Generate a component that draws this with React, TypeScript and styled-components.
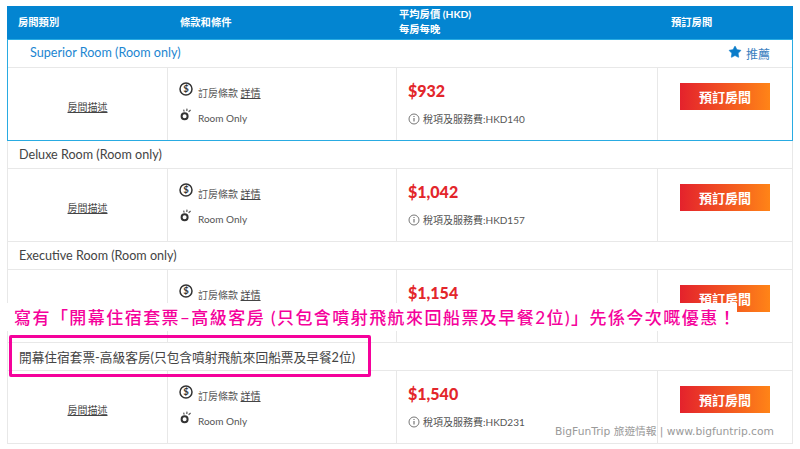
import React from "react"
import styled, { createGlobalStyle } from "styled-components"
import { Star } from "lucide-react"

const GlobalStyle = createGlobalStyle`
  html, body {
    margin: 0;
    padding: 0;
    width: 800px;
    height: 449px;
    overflow: hidden;
    background: #fff;
    font-family: Lato, "Noto Sans CJK TC", sans-serif;
  }
  * { box-sizing: border-box; }
`

const rooms = [
  { name: "Superior Room (Room only)", price: "$932", tax: "HKD140", featured: true },
  { name: "Deluxe Room (Room only)", price: "$1,042", tax: "HKD157" },
  { name: "Executive Room (Room only)", price: "$1,154", tax: "HKD173" },
  { name: "開幕住宿套票-高級客房(只包含噴射飛航來回船票及早餐2位)", price: "$1,540", tax: "HKD231", wide: true },
]

const DollarIcon = () => (
  <svg width="14" height="14" viewBox="0 0 14 14">
    <circle cx="7" cy="7" r="6" fill="none" stroke="#333" strokeWidth="1.5" />
    <text x="7" y="10.3" fontSize="9.5" fontWeight="700" fontFamily="Lato" textAnchor="middle" fill="#333">$</text>
  </svg>
)

const RoomOnlyIcon = () => (
  <svg width="14" height="14" viewBox="0 0 14 14">
    <circle cx="5.6" cy="9.2" r="3" fill="none" stroke="#333" strokeWidth="2" />
    <path d="M4.6 2.6 5.2 4.6M8 1.6 7.8 4M11.6 3 9.6 4.8" stroke="#555" strokeWidth="1.2" />
  </svg>
)

const InfoIcon = () => (
  <svg width="12" height="12" viewBox="0 0 12 12">
    <circle cx="6" cy="6" r="5" fill="none" stroke="#777" strokeWidth="1" />
    <path d="M6 5v3.6M6 3v1.1" stroke="#777" strokeWidth="1.2" />
  </svg>
)

const App: React.FC = () => {
  return (
    <>
      <GlobalStyle />
      <Page>
        <Table>
          <HeaderRow>
            <HeaderCell>房間類別</HeaderCell>
            <HeaderCell>條款和條件</HeaderCell>
            <HeaderCell>
              平均房價 (HKD)
              <br />
              每房每晚
            </HeaderCell>
            <HeaderAction>預訂房間</HeaderAction>
          </HeaderRow>
          {rooms.map((room) => (
            <Room key={room.name} $featured={room.featured}>
              <RoomTitle $featured={room.featured}>
                <RoomName $featured={room.featured} $wide={room.wide}>
                  {room.name}
                </RoomName>
                {room.featured && (
                  <Recommended>
                    <RaisedStar size={14} fill="#0a7cc9" color="#0a7cc9" strokeWidth={1} />
                    推薦
                  </Recommended>
                )}
              </RoomTitle>
              <RoomBody>
                <DescCell>
                  <TextLink>房間描述</TextLink>
                </DescCell>
                <TermsCell>
                  <TermRow>
                    <DollarIcon />
                    <TermText>
                      訂房條款 <TextLink>詳情</TextLink>
                    </TermText>
                  </TermRow>
                  <TermRow>
                    <RoomOnlyIcon />
                    <TermText>Room Only</TermText>
                  </TermRow>
                </TermsCell>
                <PriceCell>
                  <Price>{room.price}</Price>
                  <TaxRow>
                    <InfoIcon />
                    <TaxText>稅項及服務費:{room.tax}</TaxText>
                  </TaxRow>
                </PriceCell>
                <ActionCell>
                  <BookButton>預訂房間</BookButton>
                </ActionCell>
              </RoomBody>
            </Room>
          ))}
        </Table>
        <Caption>寫有「開幕住宿套票–高級客房 (只包含噴射飛航來回船票及早餐2位)」先係今次嘅優惠！</Caption>
        <Highlight />
        <Watermark>BigFunTrip 旅遊情報 | www.bigfuntrip.com</Watermark>
      </Page>
    </>
  )
}

const Page = styled.div`
  position: relative;
  width: 800px;
  height: 449px;
  padding: 6px 7px 0;
  background: #fff;
`

const Table = styled.div`
  display: flex;
  flex-direction: column;
  width: 786px;
`

const HeaderRow = styled.div`
  display: grid;
  grid-template-columns: 160px 229px 261px 136px;
  height: 33px;
  background: #0385d1;
  color: #fff;
  font-size: 10.3px;
  font-weight: 700;
  line-height: 15px;
`

const HeaderCell = styled.div`
  display: flex;
  flex-direction: column;
  justify-content: center;
  padding-left: 11px;
  &:nth-child(2) { padding-left: 13px; }
  &:nth-child(3) { padding-left: 3px; display: block; padding-top: 1px; }
`

const HeaderAction = styled.div`
  display: flex;
  align-items: center;
  padding-left: 14px;
`

const Room = styled.div<{ $featured?: boolean }>`
  display: flex;
  flex-direction: column;
  height: ${(p) => (p.$featured ? "102px" : "101px")};
  border: 1px solid ${(p) => (p.$featured ? "#29abe2" : "#e8e8e8")};
  border-top-width: ${(p) => (p.$featured ? "1px" : "0")};
`

const RoomTitle = styled.div<{ $featured?: boolean }>`
  display: flex;
  align-items: center;
  justify-content: space-between;
  height: 28px;
  padding: 0 22px 0 ${(p) => (p.$featured ? "22px" : "11px")};
  border-bottom: 1px solid #e8e8e8;
`

const RoomName = styled.div<{ $featured?: boolean; $wide?: boolean }>`
  padding-bottom: ${(p) => (p.$featured ? "3px" : "0")};
  font-size: ${(p) => (p.$wide ? "12.7px" : "12.6px")};
  color: ${(p) => (p.$featured ? "#1c86d1" : "#444")};
`

const Recommended = styled.div`
  display: flex;
  align-items: center;
  gap: 4px;
  font-size: 12px;
  color: #3a80c0;
`

const RaisedStar = styled(Star)`
  margin-bottom: 3px;
`

const RoomBody = styled.div`
  flex: 1;
  display: grid;
  grid-template-columns: 160px 229px 261px 1fr;
`

const BodyCell = styled.div`
  border-right: 1px solid #e8e8e8;
  &:last-child { border-right: 0; }
`

const DescCell = styled(BodyCell)`
  display: flex;
  align-items: center;
  justify-content: center;
  padding-top: 5px;
`

const TermsCell = styled(BodyCell)`
  display: flex;
  flex-direction: column;
  gap: 8px;
  padding: 14px 0 0 11px;
`

const TermRow = styled.div`
  display: flex;
  align-items: flex-start;
  gap: 5px;
  height: 17px;
`

const TermText = styled.span`
  margin-top: 1px;
  font-size: 10px;
  line-height: 20px;
  color: #555;
`

const TextLink = styled.span`
  font-size: 10px;
  color: #444;
  text-decoration: underline;
`

const PriceCell = styled(BodyCell)`
  padding: 11px 0 0 11px;
`

const Price = styled.div`
  font-size: 16px;
  font-weight: 900;
  line-height: 24px;
  color: #e3262b;
`

const TaxRow = styled.div`
  display: flex;
  align-items: center;
  gap: 3px;
  margin-top: 8px;
`

const TaxText = styled.span`
  font-size: 10px;
  color: #555;
`

const ActionCell = styled(BodyCell)`
  padding: 15px 0 0 22px;
`

const BookButton = styled.div`
  display: flex;
  align-items: center;
  justify-content: center;
  width: 90px;
  height: 27px;
  background: linear-gradient(90deg, #e4222c, #ff8417);
  color: #fff;
  font-size: 13px;
  font-weight: 700;
`

const Caption = styled.div`
  position: absolute;
  left: 0;
  top: 303px;
  width: 737px;
  height: 28px;
  padding-left: 14px;
  background: #fff;
  color: #f5019b;
  font-size: 17px;
  font-weight: 500;
  line-height: 30px;
  letter-spacing: 1.45px;
  white-space: nowrap;
`

const Highlight = styled.div`
  position: absolute;
  left: 9px;
  top: 335px;
  width: 362px;
  height: 42px;
  border: 3px solid #f5019b;
  border-radius: 2px;
`

const Watermark = styled.div`
  position: absolute;
  left: 555px;
  top: 425px;
  color: #9a9a9a;
  font-family: "DejaVu Sans", "Noto Sans CJK TC", sans-serif;
  font-size: 10.7px;
  line-height: 14px;
  white-space: nowrap;
`

export default App
